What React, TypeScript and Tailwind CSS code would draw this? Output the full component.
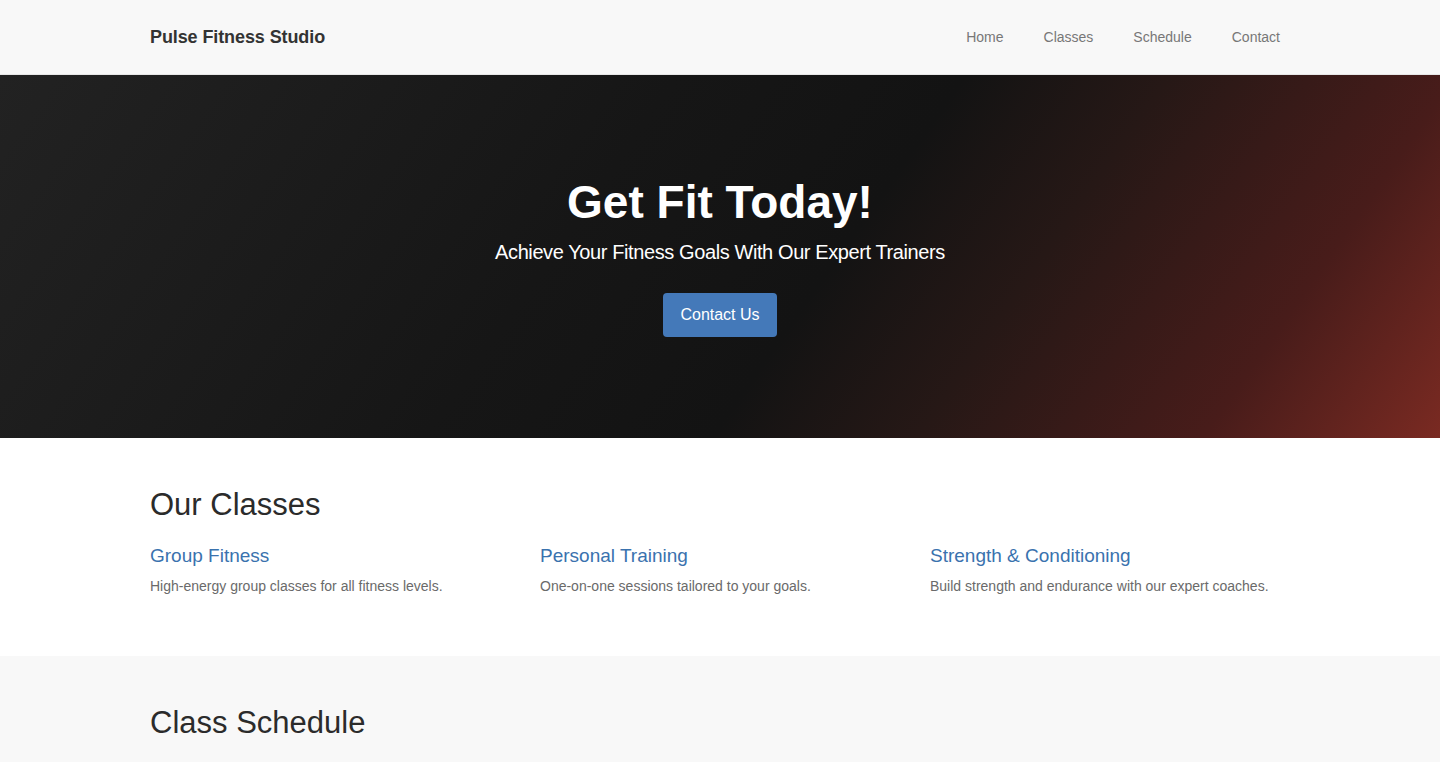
const classes = [
  {
    title: "Group Fitness",
    text: "High-energy group classes for all fitness levels.",
  },
  {
    title: "Personal Training",
    text: "One-on-one sessions tailored to your goals.",
  },
  {
    title: "Strength & Conditioning",
    text: "Build strength and endurance with our expert coaches.",
  },
]

const links = ["Home", "Classes", "Schedule", "Contact"]

export default function App() {
  return (
    <div className="min-h-screen bg-white font-['Liberation_Sans',Arial,sans-serif] text-[#333]">
      <header className="h-[75px] bg-[#f8f8f8] border-b border-[#e7e7e7]">
        <div className="mx-auto flex h-full max-w-[1170px] items-center justify-between px-[15px]">
          <a href="#" className="text-[18px] font-bold tracking-[-0.1px] text-[#333]">
            Pulse Fitness Studio
          </a>
          <nav className="mr-[10px] flex items-center gap-[40px]">
            {links.map((l) => (
              <a key={l} href="#" className="text-[14px] text-[#777]">
                {l}
              </a>
            ))}
          </nav>
        </div>
      </header>

      <section className="flex h-[363px] flex-col items-center justify-center bg-[linear-gradient(125deg,#222_0%,#161616_40%,#131313_57%,#261816_69%,#481c1a_86%,#7a2a22_100%)] text-center text-white">
        <h1 className="text-[46px] font-bold leading-[1.15]">Get Fit Today!</h1>
        <p className="mt-[10px] text-[20px] font-light tracking-[-0.4px] leading-[27px]">
          Achieve Your Fitness Goals With Our Expert Trainers
        </p>
        <a
          href="#"
          className="mt-[27px] flex h-[44px] items-center rounded-[4px] bg-[#4479b9] px-[17px] text-[16px] text-white"
        >
          Contact Us
        </a>
      </section>

      <section className="pb-[60px] pt-[50px]">
        <div className="mx-auto max-w-[1170px] px-[15px]">
          <h2 className="text-[31px] font-medium leading-[34px] text-[#2b2b2b]">
            Our Classes
          </h2>
          <div className="mt-[24px] grid grid-cols-3 gap-x-[30px]">
            {classes.map((c) => (
              <div key={c.title}>
                <h4 className="text-[19px] leading-[20px] text-[#3a72ae]">
                  {c.title}
                </h4>
                <p className="mt-[10px] text-[14px] leading-[20px] text-[#6a6a6a]">
                  {c.text}
                </p>
              </div>
            ))}
          </div>
        </div>
      </section>

      <section className="bg-[#f8f8f8] pb-[60px] pt-[50px]">
        <div className="mx-auto max-w-[1170px] px-[15px]">
          <h2 className="text-[31px] font-medium leading-[34px] text-[#2b2b2b]">
            Class Schedule
          </h2>
        </div>
      </section>
    </div>
  )
}
